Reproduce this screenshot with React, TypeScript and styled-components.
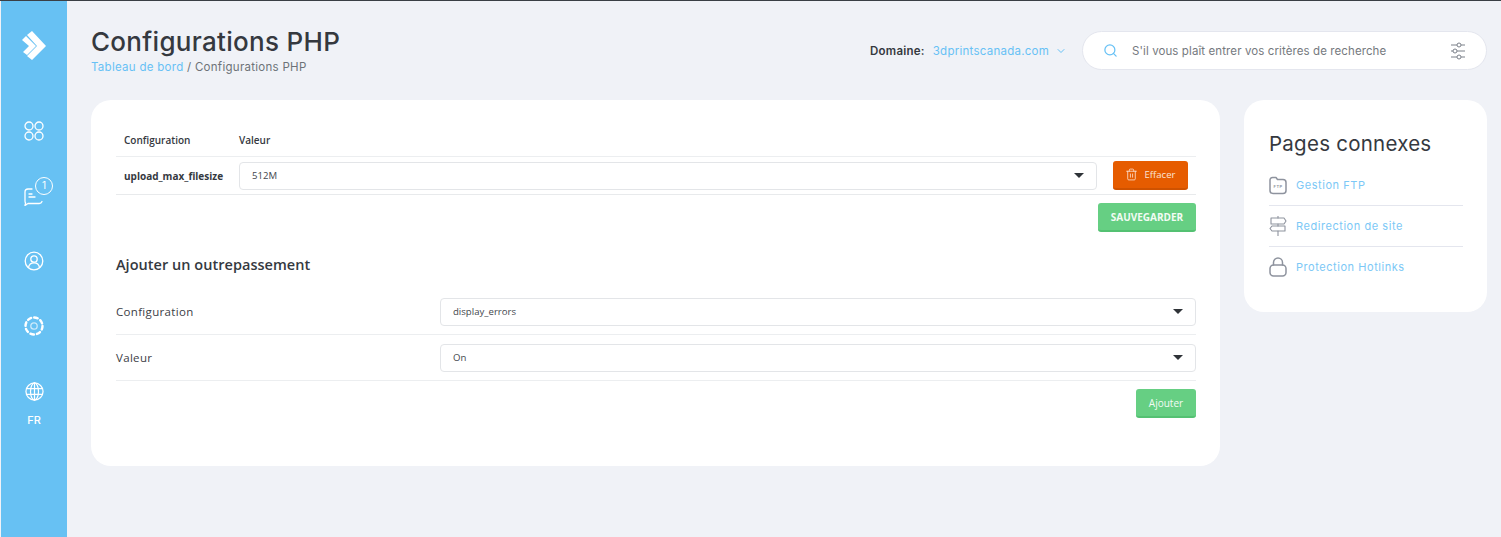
import React from 'react';
import styled, { createGlobalStyle } from 'styled-components';
import { ChevronDown, Search, Trash2 } from 'lucide-react';

const GlobalStyle = createGlobalStyle`
  html, body { margin: 0; padding: 0; background: #f0f2f7; }
  body { font-family: "Open Sans", sans-serif; overflow: hidden; }
`;

const Shell = styled.div`
  display: flex;
  width: 1501px;
  height: 537px;
  border-top: 1px solid #3a3f45;
  box-sizing: border-box;
  background: #f0f2f7;
`;

const Sidebar = styled.nav`
  width: 66px;
  margin-left: 1px;
  flex: none;
  background: #67c1f3;
  display: flex;
  flex-direction: column;
  align-items: center;
  color: #fff;
`;

const LogoSlot = styled.div`
  height: 62px;
  margin-top: 29px;
  margin-bottom: 26px;
  display: flex;
  align-items: flex-start;
`;

const NavItem = styled.div<{ $gap: number }>`
  position: relative;
  height: 26px;
  margin-bottom: ${p => p.$gap}px;
  display: flex;
  align-items: center;
  justify-content: center;
`;

const Badge = styled.span`
  position: absolute;
  top: -6px;
  left: 11px;
  width: 18px;
  height: 18px;
  box-sizing: border-box;
  border: 1.3px solid #fff;
  border-radius: 50%;
  background: #67c1f3;
  font: 400 10px/15.5px "Inter", sans-serif;
  text-align: center;
`;

const Lang = styled.span`
  margin-top: -1px;
  font: 500 11px "Inter", sans-serif;
`;

const Main = styled.main`
  flex: 1;
  padding: 0 14px 0 24px;
  min-width: 0;
`;

const Header = styled.header`
  height: 99px;
  display: flex;
  justify-content: space-between;
`;

const TitleBlock = styled.div`
  padding-top: 25px;
`;

const Title = styled.h1`
  margin: 0;
  font: 500 26px/32px "Inter", sans-serif;
  letter-spacing: 0.3px;
  color: #35393f;
`;

const Crumbs = styled.div`
  margin-top: 1px;
  font: 400 11.5px/16px "Inter", sans-serif;
  letter-spacing: 0.28px;
  color: #6d7278;
`;

const Crumb = styled.span`
  color: #67c1f5;
`;

const HeaderRight = styled.div`
  display: flex;
  align-items: flex-start;
  padding-top: 30px;
`;

const Domain = styled.div`
  display: flex;
  align-items: center;
  height: 39px;
  margin-right: 15px;
  font: 400 11.5px "Inter", sans-serif;
  letter-spacing: 0.25px;
  color: #67c1f5;
`;

const DomainLabel = styled.b`
  font-weight: 600;
  color: #35393f;
  margin-right: 8px;
`;

const SearchBox = styled.div`
  width: 405px;
  height: 39px;
  box-sizing: border-box;
  display: flex;
  align-items: center;
  padding: 0 20px;
  background: #fff;
  border: 1px solid #e4e6ee;
  border-radius: 20px;
`;

const SearchText = styled.span`
  flex: 1;
  margin-left: 14px;
  font: 400 11.5px "Inter", sans-serif;
  letter-spacing: 0.1px;
  color: #75797e;
`;

const Columns = styled.div`
  display: flex;
  align-items: flex-start;
  gap: 24px;
`;

const MainCard = styled.section`
  width: 1129px;
  height: 366px;
  box-sizing: border-box;
  padding: 25px 24px 0 25px;
  background: #fff;
  border-radius: 20px;
`;

const TableHead = styled.div`
  display: grid;
  grid-template-columns: 115px 1fr;
  height: 30px;
  padding: 0 0 1px 8px;
  align-items: center;
  border-bottom: 1px solid #eceef0;
  font: 600 10px "Open Sans", sans-serif;
  color: #35393f;
`;

const TableRow = styled.div`
  display: flex;
  align-items: center;
  height: 37px;
  padding-left: 8px;
  border-bottom: 1px solid #e8eaec;
`;

const KeyName = styled.span`
  width: 115px;
  flex: none;
  font: 700 10px "Open Sans", sans-serif;
  color: #35393f;
`;

const Select = styled.div<{ $width: number }>`
  width: ${p => p.$width}px;
  height: 28px;
  box-sizing: border-box;
  display: flex;
  align-items: center;
  justify-content: space-between;
  padding: 0 12px;
  border: 1px solid #e3e5e8;
  border-radius: 4px;
  background: #fff;
  font: 400 9.6px "Open Sans", sans-serif;
  color: #44484e;
`;

const Caret = styled.i`
  width: 0;
  height: 0;
  border-left: 5px solid transparent;
  border-right: 5px solid transparent;
  border-top: 5px solid #2f3338;
`;

const DangerButton = styled.button`
  width: 75px;
  height: 29px;
  margin-left: 16px;
  display: flex;
  align-items: center;
  justify-content: center;
  gap: 6px;
  padding: 0;
  border: 0;
  border-bottom: 2px solid #cf5200;
  border-radius: 3px;
  background: #e65c00;
  color: #fbe3d5;
  font: 400 9.6px "Open Sans", sans-serif;
`;

const Actions = styled.div`
  display: flex;
  justify-content: flex-end;
  padding-top: 8px;
`;

const SuccessButton = styled.button<{ $width: number; $bold?: boolean }>`
  width: ${p => p.$width}px;
  height: 29px;
  padding: 0;
  border: 0;
  border-bottom: 2px solid #54c172;
  border-radius: 3px;
  background: #66cf83;
  color: #f2fbf4;
  font: ${p => (p.$bold ? 700 : 400)} 10px "Open Sans", sans-serif;
`;

const SectionTitle = styled.h2`
  margin: 23px 0 14px;
  font: 600 14.5px/20px "Open Sans", sans-serif;
  letter-spacing: 0.03px;
  color: #35393f;
`;

const FormRow = styled.div`
  display: flex;
  align-items: center;
  height: 45px;
  border-bottom: 1px solid #eceef0;
`;

const FormLabel = styled.label`
  width: 324px;
  flex: none;
  font: 400 11.5px "Open Sans", sans-serif;
  letter-spacing: 0.32px;
  color: #3c4046;
`;

const SideCard = styled.aside`
  width: 243px;
  height: 212px;
  box-sizing: border-box;
  padding: 29px 24px 0 25px;
  background: #fff;
  border-radius: 20px;
`;

const SideTitle = styled.h3`
  margin: 0 0 6px;
  font: 400 20.5px/30px "Inter", sans-serif;
  letter-spacing: 0.25px;
  color: #35393f;
`;

const SideLink = styled.a<{ $last?: boolean }>`
  display: flex;
  align-items: center;
  gap: 9px;
  height: 40px;
  border-bottom: ${p => (p.$last ? 'none' : '1px solid #e4e6ee')};
  font: 400 11px "Inter", sans-serif;
  letter-spacing: 0.55px;
  color: #7cc8f6;
`;

const LinkIcon = styled.svg`
  width: 18px;
  height: 20px;
  flex: none;
  fill: none;
  stroke: #8e939e;
  stroke-width: 1.5;
  stroke-linecap: round;
  stroke-linejoin: round;
`;

const TinyLabel = styled.text`
  fill: #8e939e;
  stroke: none;
  font: 600 4px "Inter", sans-serif;
`;

const ThinPath = styled.path`
  stroke-width: 1.1;
`;

const NavIcon = styled.svg<{ $size: number }>`
  width: ${p => p.$size}px;
  height: ${p => p.$size}px;
  fill: none;
  stroke: #fff;
  stroke-width: 1.3;
  stroke-linecap: round;
  stroke-linejoin: round;
`;

const GearRing = styled.circle`
  stroke-width: 2.4;
  stroke-dasharray: 3.6 3.07;
`;

const GearCore = styled.circle`
  stroke-width: 1.3;
  opacity: 0.65;
`;

const FilterIcon = styled.svg`
  width: 16px;
  height: 18px;
  fill: none;
  stroke: #7b8089;
  stroke-width: 1;
`;

const Logo = () => (
  <svg width="28" height="32" viewBox="0 0 28 32">
    <path d="M27 16L12 31l-5-4 1 1 4 3 15-15z" fill="#9fb2c0" />
    <path d="M12 1l14 15-14 14-5-4 10-10L7 5z" fill="#fff" />
    <path d="M2 10l4-4 10 10-9 9-4-3 6-6z" fill="#fff" />
  </svg>
);

const FilterGlyph = () => (
  <FilterIcon viewBox="0 0 16 18">
    <path d="M1 3h6M11 3h4M1 9h2M7 9h8M1 15h6M11 15h4" />
    <circle cx="9" cy="3" r="2" />
    <circle cx="5" cy="9" r="2" />
    <circle cx="9" cy="15" r="2" />
  </FilterIcon>
);

export default function App() {
  return (
    <>
      <GlobalStyle />
      <Shell>
        <Sidebar>
          <LogoSlot>
            <Logo />
          </LogoSlot>
          <NavItem $gap={39}>
            <NavIcon $size={20} viewBox="0 0 20 20">
              <circle cx="5" cy="5" r="4" />
              <circle cx="15" cy="5" r="4" />
              <circle cx="5" cy="15" r="4" />
              <circle cx="15" cy="15" r="4" />
            </NavIcon>
          </NavItem>
          <NavItem $gap={39}>
            <NavIcon $size={20} viewBox="0 0 20 20">
              <path d="M8 3H4a3 3 0 0 0-3 3v9c0 1 .2 1.6.6 2L1 19.5l3-2h11a3 3 0 0 0 3-2" />
              <path d="M5 8h3M5 11h6" />
            </NavIcon>
            <Badge>1</Badge>
          </NavItem>
          <NavItem $gap={39}>
            <NavIcon $size={20} viewBox="0 0 20 20">
              <circle cx="10" cy="10" r="8.8" />
              <circle cx="10" cy="8" r="3.2" />
              <path d="M4.5 16.5c.5-3 2.5-4.6 5.5-4.6s5 1.6 5.5 4.6" />
            </NavIcon>
          </NavItem>
          <NavItem $gap={39}>
            <NavIcon $size={20} viewBox="0 0 20 20">
              <GearRing cx="10" cy="10" r="8.5" />
              <GearCore cx="10" cy="10" r="3.2" />
            </NavIcon>
          </NavItem>
          <NavItem $gap={10}>
            <NavIcon $size={19} viewBox="0 0 20 20">
              <circle cx="10" cy="10" r="9" />
              <ellipse cx="10" cy="10" rx="4.2" ry="9" />
              <path d="M1.6 7h16.8M1.6 13h16.8M10 1v18" />
            </NavIcon>
          </NavItem>
          <Lang>FR</Lang>
        </Sidebar>

        <Main>
          <Header>
            <TitleBlock>
              <Title>Configurations PHP</Title>
              <Crumbs>
                <Crumb>Tableau de bord</Crumb> / Configurations PHP
              </Crumbs>
            </TitleBlock>
            <HeaderRight>
              <Domain>
                <DomainLabel>Domaine:</DomainLabel>
                3dprintscanada.com
                <ChevronDown size={12} style={{ marginLeft: 6 }} />
              </Domain>
              <SearchBox>
                <Search size={15} color="#67c1f5" />
                <SearchText>S'il vous plaît entrer vos critères de recherche</SearchText>
                <FilterGlyph />
              </SearchBox>
            </HeaderRight>
          </Header>

          <Columns>
            <MainCard>
              <TableHead>
                <span>Configuration</span>
                <span>Valeur</span>
              </TableHead>
              <TableRow>
                <KeyName>upload_max_filesize</KeyName>
                <Select $width={858}>
                  512M
                  <Caret />
                </Select>
                <DangerButton>
                  <Trash2 size={13} strokeWidth={1.5} />
                  Effacer
                </DangerButton>
              </TableRow>
              <Actions>
                <SuccessButton $width={98} $bold>
                  SAUVEGARDER
                </SuccessButton>
              </Actions>
              <SectionTitle>Ajouter un outrepassement</SectionTitle>
              <FormRow>
                <FormLabel>Configuration</FormLabel>
                <Select $width={756}>
                  display_errors
                  <Caret />
                </Select>
              </FormRow>
              <FormRow>
                <FormLabel>Valeur</FormLabel>
                <Select $width={756}>
                  On
                  <Caret />
                </Select>
              </FormRow>
              <Actions>
                <SuccessButton $width={60}>Ajouter</SuccessButton>
              </Actions>
            </MainCard>

            <SideCard>
              <SideTitle>Pages connexes</SideTitle>
              <SideLink>
                <LinkIcon viewBox="0 0 18 20">
                  <path d="M1 5a2.5 2.5 0 0 1 2.5-2.5H7l1.5 2H14a3 3 0 0 1 3 3v8a3 3 0 0 1-3 3H4a3 3 0 0 1-3-3z" />
                  <TinyLabel x="4.5" y="13">FTP</TinyLabel>
                </LinkIcon>
                Gestion FTP
              </SideLink>
              <SideLink>
                <LinkIcon viewBox="0 0 18 20">
                  <ThinPath d="M9 0v2M9 8v2M9 15v5" />
                  <ThinPath d="M2 2h13l2 3-2 3H2z" />
                  <ThinPath d="M16 10H3l-2 2.5L3 15h13z" />
                </LinkIcon>
                Redirection de site
              </SideLink>
              <SideLink $last>
                <LinkIcon viewBox="0 0 18 20">
                  <rect x="1" y="8" width="16" height="11" rx="3.5" />
                  <path d="M4.5 8V5.5a4.5 4.5 0 0 1 9 0V8" />
                </LinkIcon>
                Protection Hotlinks
              </SideLink>
            </SideCard>
          </Columns>
        </Main>
      </Shell>
    </>
  );
}
